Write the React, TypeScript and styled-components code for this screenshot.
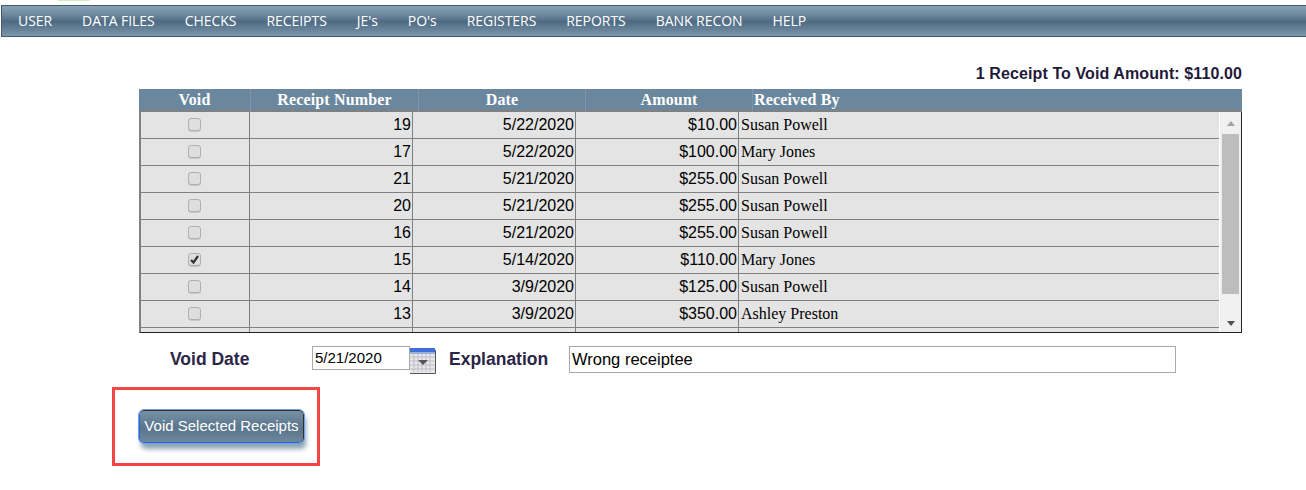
import React from 'react'
import styled, { createGlobalStyle } from 'styled-components'

const Global = createGlobalStyle`
	html, body {
		margin: 0;
		padding: 0;
		background: #fff;
		overflow: hidden;
	}
`

const Page = styled.div`
	width: 1306px;
	height: 490px;
	display: flex;
	flex-direction: column;
	font-family: 'Liberation Sans', Arial, sans-serif;
	color: #000;
`

const TopStrip = styled.div`
	height: 5px;
	padding-left: 58px;
	flex: none;
`

const Glow = styled.div`
	width: 32px;
	height: 1px;
	background: #cfeec0;
	border-radius: 0 0 16px 16px;
`

const NavBar = styled.nav`
	box-sizing: border-box;
	height: 32px;
	margin-left: 1px;
	flex: none;
	display: flex;
	align-items: center;
	gap: 30px;
	padding: 0 0 2px 16px;
	border: 1px solid #3f5a72;
	border-right: 0;
	background: linear-gradient(#8ba2b5 0%, #6d879d 30%, #4f6b83 52%, #5f7b92 70%, #7d96aa 100%);
`

const NavItem = styled.span`
	font-family: 'Open Sans', sans-serif;
	font-size: 14px;
	letter-spacing: -0.05px;
	color: #fff;
	white-space: nowrap;
`

const Content = styled.main`
	display: flex;
	flex-direction: column;
	padding: 27px 64px 0 139px;
`

const Summary = styled.div`
	height: 25px;
	text-align: right;
	font-size: 16px;
	letter-spacing: 0.1px;
	font-weight: 700;
	line-height: 20px;
	color: #1f1a3a;
`

const HeaderRow = styled.div`
	height: 23px;
	display: grid;
	grid-template-columns: 111px 168px 167px 167px 1fr;
	background: #6b879e;
	box-shadow: inset 0 -2px 0 #808080;
`

const HeaderCell = styled.div<{ $left?: boolean }>`
	font-family: 'Liberation Serif', serif;
	font-size: 16px;
	letter-spacing: 0.15px;
	font-weight: 700;
	color: #fff;
	line-height: 21px;
	text-align: ${p => (p.$left ? 'left' : 'center')};
	padding-left: ${p => (p.$left ? '1px' : '0')};
	border-left: 1px solid #7e94a8;
	&:first-child {
		border-left: 0;
	}
`

const Body = styled.div`
	height: 221px;
	display: flex;
	border-left: 2px solid #808080;
	border-right: 1px solid #222;
	border-bottom: 1px solid #222;
	box-sizing: border-box;
	background: #e4e4e4;
`

const Rows = styled.div`
	flex: 1;
	overflow: hidden;
`

const Row = styled.div`
	height: 27px;
	box-sizing: border-box;
	display: grid;
	grid-template-columns: 108px 163px 163px 163px 1fr;
	border-bottom: 1px solid #808080;
`

const Cell = styled.div`
	border-left: 1px solid #808080;
	font-size: 16px;
	line-height: 26px;
	text-align: right;
	padding-right: 1px;
	&:first-child {
		border-left: 0;
		display: flex;
		align-items: center;
		justify-content: center;
		padding: 0 2px 1px 0;
	}
`

const NameCell = styled.div`
	border-left: 1px solid #808080;
	font-family: 'Liberation Serif', serif;
	font-size: 16px;
	line-height: 25px;
	padding-left: 2px;
`

const CheckBox = styled.span`
	box-sizing: border-box;
	width: 13px;
	height: 13px;
	display: flex;
	align-items: center;
	justify-content: center;
	border: 1px solid #b0b0b0;
	border-radius: 3px;
	background: #dedede;
	box-shadow: 0 1px 0 #c8c8c8;
`

const ScrollTrack = styled.div`
	width: 22px;
	flex: none;
	background: #f0f0f0;
	border-left: 1px solid #fff;
	display: flex;
	flex-direction: column;
	align-items: center;
	box-sizing: border-box;
`

const ScrollArrow = styled.div<{ $down?: boolean }>`
	height: 22px;
	flex: none;
	display: flex;
	align-items: center;
	justify-content: center;
	&::before {
		content: '';
		border-left: 4.5px solid transparent;
		border-right: 4.5px solid transparent;
		${p =>
			p.$down
				? 'border-top: 5px solid #505050; margin-top: 5px;'
				: 'border-bottom: 5px solid #a3a3a3; margin-top: 1px;'}
	}
`

const ScrollThumb = styled.div`
	width: 17px;
	height: 160px;
	flex: none;
	background: #bdbdbd;
`

const ScrollGap = styled.div`
	flex: 1;
`

const FormRow = styled.div`
	display: flex;
	align-items: flex-start;
	height: 27px;
	margin-top: 13px;
`

const FormLabel = styled.label<{ $width: number; $indent?: number }>`
	font-size: 17.5px;
	line-height: 27px;
	font-weight: 700;
	color: #2b2547;
	width: ${p => p.$width}px;
	padding-left: ${p => p.$indent ?? 0}px;
	flex: none;
	box-sizing: border-box;
`

const DateInput = styled.div`
	box-sizing: border-box;
	width: 98px;
	height: 24px;
	border: 1px solid #a9a9a9;
	font-size: 15px;
	line-height: 22px;
	padding-left: 2px;
	background: #fff;
`

const CalendarBox = styled.svg`
	width: 26px;
	height: 26px;
	flex: none;
	margin: 2px 13px 0 0;
`

const TextBox = styled.div`
	box-sizing: border-box;
	width: 607px;
	height: 27px;
	border: 1px solid #a9a9a9;
	font-size: 16.5px;
	line-height: 25px;
	padding-left: 2px;
`

const ButtonFrame = styled.div`
	box-sizing: border-box;
	width: 208px;
	height: 79px;
	margin: 14px 0 0 -27px;
	border: 3px solid #f44444;
	display: flex;
	padding: 20px 0 0 24px;
`

const VoidButton = styled.button`
	box-sizing: border-box;
	width: 165px;
	height: 33px;
	padding: 0 0 2px;
	font-family: 'Liberation Sans', Arial, sans-serif;
	font-size: 15px;
	color: #fff;
	white-space: nowrap;
	border: 1px solid #2f2f2f;
	border-radius: 5px;
	outline: 1px solid #6ea0ee;
	border-bottom-color: #2a66c8;
	border-left-color: #2a66c8;
	background: linear-gradient(#7890a4 0%, #5e7a91 45%, #5a758c 55%, #6d879c 100%);
	box-shadow: 2px 6px 5px #8ea3b3;
`

const rows = [
	{ no: '19', date: '5/22/2020', amount: '$10.00', by: 'Susan Powell' },
	{ no: '17', date: '5/22/2020', amount: '$100.00', by: 'Mary Jones' },
	{ no: '21', date: '5/21/2020', amount: '$255.00', by: 'Susan Powell' },
	{ no: '20', date: '5/21/2020', amount: '$255.00', by: 'Susan Powell' },
	{ no: '16', date: '5/21/2020', amount: '$255.00', by: 'Susan Powell' },
	{ no: '15', date: '5/14/2020', amount: '$110.00', by: 'Mary Jones', on: true },
	{ no: '14', date: '3/9/2020', amount: '$125.00', by: 'Susan Powell' },
	{ no: '13', date: '3/9/2020', amount: '$350.00', by: 'Ashley Preston' },
]

const menu = ['USER', 'DATA FILES', 'CHECKS', 'RECEIPTS', "JE's", "PO's", 'REGISTERS', 'REPORTS', 'BANK RECON', 'HELP']

const Calendar = () => (
	<CalendarBox viewBox="0 0 26 26">
		<rect x="0" y="1" width="25" height="24" fill="#e8e8ea" />
		<path
			d="M4 6v18M8 6v18M12 6v18M16 6v18M20 6v18M0 9h25M0 13h25M0 17h25M0 21h25"
			stroke="#bdbdc4"
			strokeWidth="1"
		/>
		<rect x="0" y="0" width="25" height="4" fill="#3f6fd8" />
		<rect x="0" y="4" width="25" height="2" fill="#9bb0d8" />
		<path d="M8 12h10l-5 5z" fill="#555" />
		<path d="M25.5 2v23.5H0" stroke="#555" strokeWidth="1" fill="none" />
	</CalendarBox>
)

export default function App() {
	return (
		<Page>
			<Global />
			<TopStrip>
				<Glow />
			</TopStrip>
			<NavBar>
				{menu.map(m => (
					<NavItem key={m}>{m}</NavItem>
				))}
			</NavBar>
			<Content>
				<Summary>1 Receipt To Void Amount: $110.00</Summary>
				<HeaderRow>
					<HeaderCell>Void</HeaderCell>
					<HeaderCell>Receipt Number</HeaderCell>
					<HeaderCell>Date</HeaderCell>
					<HeaderCell>Amount</HeaderCell>
					<HeaderCell $left>Received By</HeaderCell>
				</HeaderRow>
				<Body>
					<Rows>
						{rows.map(r => (
							<Row key={r.no}>
								<Cell>
									<CheckBox>
										{r.on && (
											<svg width="11" height="11" viewBox="0 0 11 11">
												<path d="M2 6l2.5 2.5L9 2" stroke="#333" strokeWidth="2.2" fill="none" />
											</svg>
										)}
									</CheckBox>
								</Cell>
								<Cell>{r.no}</Cell>
								<Cell>{r.date}</Cell>
								<Cell>{r.amount}</Cell>
								<NameCell>{r.by}</NameCell>
							</Row>
						))}
						{/* next row is scrolled out of view, only its cell borders show */}
						<Row>
							<Cell />
							<Cell />
							<Cell />
							<Cell />
							<NameCell />
						</Row>
					</Rows>
					<ScrollTrack>
						<ScrollArrow />
						<ScrollThumb />
						<ScrollGap />
						<ScrollArrow $down />
					</ScrollTrack>
				</Body>
				<FormRow>
					<FormLabel $width={173} $indent={31}>
						Void Date
					</FormLabel>
					<DateInput>5/21/2020</DateInput>
					<Calendar />
					<FormLabel $width={120}>Explanation</FormLabel>
					<TextBox>Wrong receiptee</TextBox>
				</FormRow>
				<ButtonFrame>
					<VoidButton>Void Selected Receipts</VoidButton>
				</ButtonFrame>
			</Content>
		</Page>
	)
}
